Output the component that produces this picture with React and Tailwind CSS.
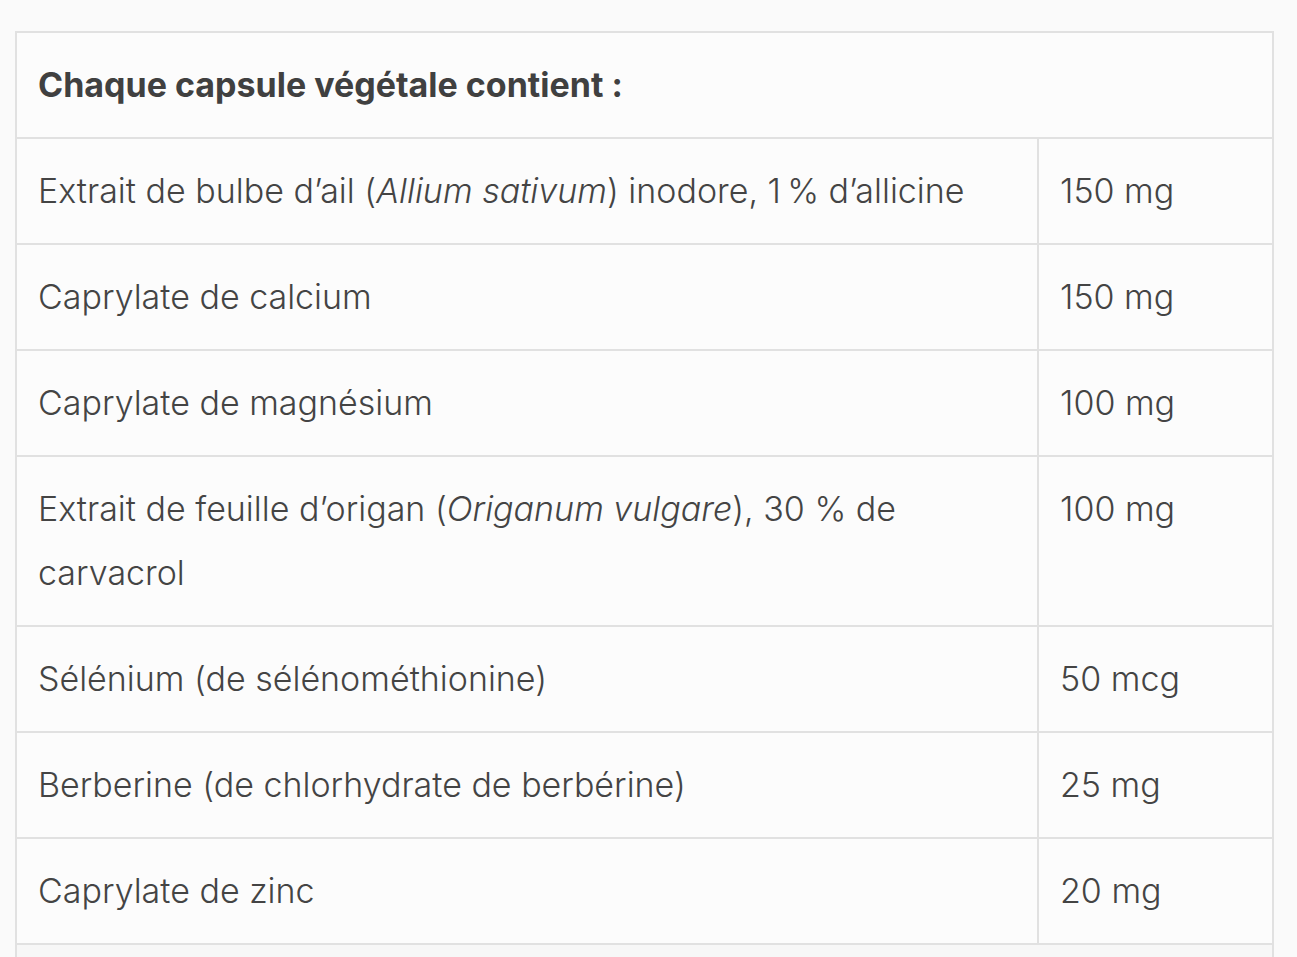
import React from 'react';

const rows = [
    { name: <>Extrait de bulbe d’ail (<em>Allium sativum</em>) inodore, 1{'\u202F'}% d’allicine</>, dose: '150 mg' },
    { name: 'Caprylate de calcium', dose: '150 mg' },
    { name: 'Caprylate de magnésium', dose: '100 mg' },
    { name: <>Extrait de feuille d’origan (<em>Origanum vulgare</em>), 30{'\u00A0'}% de carvacrol</>, dose: '100 mg' },
    { name: 'Sélénium (de sélénométhionine)', dose: '50 mcg' },
    { name: 'Berberine (de chlorhydrate de berbérine)', dose: '25 mg' },
    { name: 'Caprylate de zinc', dose: '20 mg' },
];

export default function App() {
    return (
        <div className="h-screen bg-[#fafafa] pt-[31px] pl-[15px] overflow-hidden" style={{ fontFamily: 'Inter, "Noto Sans", sans-serif' }}>
            <table className="w-[1259px] border-collapse bg-[#fcfcfc] text-[#444] text-[34px] leading-[64px] font-light">
                <tbody>
                    <tr>
                        <th colSpan="2" className="border-2 border-[#e1e1e1] py-[20px] pl-[21px] text-left font-bold text-[#404040]">
                            Chaque capsule végétale contient :
                        </th>
                    </tr>
                    {rows.map((r, i) => (
                        <tr key={i}>
                            <td className="border-2 border-[#e1e1e1] w-[1022px] py-[20px] pl-[21px] pr-[12px] align-top">{r.name}</td>
                            <td className="border-2 border-[#e1e1e1] py-[20px] pl-[21px] align-top">{r.dose}</td>
                        </tr>
                    ))}
                    {/* next section, cut off by the fold */}
                    <tr>
                        <td colSpan="2" className="border-2 border-[#e1e1e1] bg-[#f7f7f7] py-[20px] pl-[21px] font-bold text-[#404040]">
                            Autres ingrédients :
                        </td>
                    </tr>
                </tbody>
            </table>
        </div>
    );
}
